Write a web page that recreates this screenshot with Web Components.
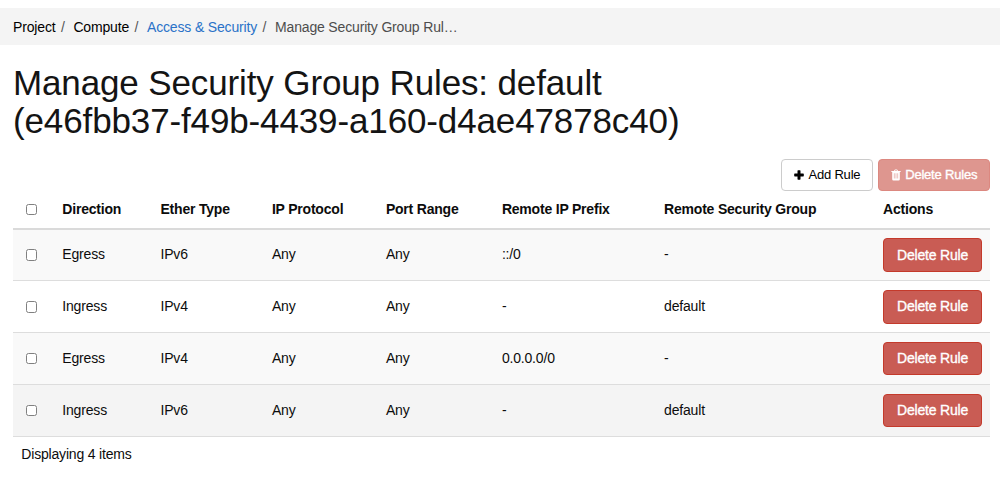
<!DOCTYPE html>
<html lang="en">
<head>
<meta charset="utf-8">
<title>Manage Security Group Rules</title>
<style>
html,body{margin:0;padding:0;background:#fff}
body{font-family:"Liberation Sans",Arial,sans-serif;font-size:14px;letter-spacing:-.18px;line-height:19px;color:#0c0c0c;width:1000px;height:482px;overflow:hidden}
</style>
</head>
<body>
<rules-page></rules-page>
<script>
const define = (name, html, setup) => {
  const t = document.createElement('template');
  t.innerHTML = html;
  customElements.define(name, class extends HTMLElement {
    constructor() {
      super();
      this.attachShadow({mode: 'open'}).append(t.content.cloneNode(true));
    }
    connectedCallback() { if (setup) setup(this, this.shadowRoot); }
  });
};

define('bread-crumb', `
<style>
:host{display:flex;align-items:center;height:37px;background:#f4f4f4;padding:1px 0 0 13px;box-sizing:border-box;white-space:nowrap;letter-spacing:-.16px}
</style><slot></slot>`);

define('crumb-item', `
<style>
:host{display:flex;color:#000}
:host([link]){color:#2a72c8}
:host([active]){color:#4d4d4d}
.sep{color:#555;margin:0 8.7px 0 5.5px}
:host([first]) .sep{display:none}
</style><span class="sep">/</span><span><slot></slot></span>`);

define('page-title', `
<style>
:host{display:block;padding:18.8px 13px 0}
h1{margin:0;font-size:35px;letter-spacing:-.13px;font-weight:400;line-height:38.4px;color:#141414;white-space:nowrap}
</style><h1><slot></slot></h1>`);

define('action-button', `
<style>
:host{display:inline-flex;flex:none}
button{all:unset;box-sizing:border-box;display:flex;align-items:center;justify-content:center;gap:4px;
 width:99px;height:33.4px;border:1px solid #c43a2b;border-radius:4px;background:#c95c54;color:#fff;
 white-space:nowrap;-webkit-text-stroke:.35px #fff}
:host([kind=add]) button,:host([kind=bulk]) button{height:32px;font-size:13px;letter-spacing:-.2px;padding-bottom:1px}
:host([kind=add]) button{width:92px;background:#fff;border-color:#ccc;color:#000;-webkit-text-stroke:0}
:host([kind=bulk]) button{width:112.4px;background:#de968f;border-color:#dc8880}
</style><button><slot name="icon"></slot><span><slot></slot></span></button>`);

define('plus-icon', `
<style>:host{display:flex}</style>
<svg width="10" height="10" viewBox="0 0 10 10"><path fill="currentColor" d="M4.1.2h1.8q.6 0 .6.6v2.7h2.7q.6 0 .6.6v1.7q0 .6-.6.6H6.5v2.7q0 .6-.6.6H4.1q-.6 0-.6-.6V6.4H.8q-.6 0-.6-.6V4.1q0-.6.6-.6h2.7V.8q0-.6.6-.6z"/></svg>`);

define('trash-icon', `
<style>:host{display:flex}</style>
<svg width="10" height="12" viewBox="0 0 10 12"><path fill="currentColor" fill-rule="evenodd" d="M3 2l.5-1.1q.2-.5.7-.5h1.6q.5 0 .7.5L7 2h2.4q.3 0 .3.3v.5q0 .3-.3.3h-.6v7.1q0 1.3-1.2 1.3H2.4q-1.2 0-1.2-1.3V3.1H.6q-.3 0-.3-.3v-.5Q.3 2 .6 2zM4 2h2l-.4-.8H4.4zM2.9 4.3v5.2h.6V4.3zm1.8 0v5.2h.6V4.3zm1.8 0v5.2h.6V4.3z"/></svg>`);

define('check-box', `
<style>
:host{display:flex}
input{appearance:none;box-sizing:border-box;width:11.4px;height:11.4px;margin:0;border:1px solid #808080;border-radius:2.5px;background:#fff}
</style><input type="checkbox" aria-label="Select">`);

define('rule-row', `
<style>
:host{display:grid;grid-template-columns:13px 36.3px 98.2px 111.4px 114px 116px 162.2px 219px 1fr;align-items:center;
 height:51.7px;box-sizing:border-box;border-bottom:1.3px solid #ddd;background:#fff;white-space:nowrap}
:host([tone=light]){background:#f9f9f9}
:host([tone=hover]){background:#f4f4f4}
:host([head]){height:38.3px;border-bottom:2px solid #dadada;font-weight:700;letter-spacing:-.2px}
check-box{grid-column:2}
::slotted(span){padding-bottom:.4px}
</style><check-box></check-box><slot></slot>`);

define('rules-page', `
<style>
:host{display:flex;flex-direction:column;padding-top:8px}
.tools{display:flex;justify-content:flex-end;gap:4.6px;padding:18.4px 9.6px 0 0}
.table{margin:.5px 10px 0 13px}
.foot{padding:8.3px 0 0 21.3px}
</style>
<bread-crumb>
 <crumb-item first>Project</crumb-item><crumb-item>Compute</crumb-item><crumb-item link>Access &amp; Security</crumb-item><crumb-item active>Manage Security Group Rul…</crumb-item>
</bread-crumb>
<page-title>Manage Security Group Rules: default<br>(e46fbb37-f49b-4439-a160-d4ae47878c40)</page-title>
<div class="tools">
 <action-button kind="add"><plus-icon slot="icon"></plus-icon>Add Rule</action-button>
 <action-button kind="bulk"><trash-icon slot="icon"></trash-icon>Delete Rules</action-button>
</div>
<div class="table"></div>
<div class="foot">Displaying 4 items</div>`, (host, root) => {
  const rows = [
    ['head', 'Direction', 'Ether Type', 'IP Protocol', 'Port Range', 'Remote IP Prefix', 'Remote Security Group', 'Actions'],
    ['tone="light"', 'Egress', 'IPv6', 'Any', 'Any', '::/0', '-'],
    ['', 'Ingress', 'IPv4', 'Any', 'Any', '-', 'default'],
    ['tone="light"', 'Egress', 'IPv4', 'Any', 'Any', '0.0.0.0/0', '-'],
    ['tone="hover"', 'Ingress', 'IPv6', 'Any', 'Any', '-', 'default']
  ];
  root.querySelector('.table').innerHTML = rows.map(([attr, ...cells]) =>
    `<rule-row ${attr}>${cells.map(c => `<span>${c}</span>`).join('')}${attr === 'head' ? '' : '<action-button>Delete Rule</action-button>'}</rule-row>`
  ).join('');
});
</script>
</body>
</html>
